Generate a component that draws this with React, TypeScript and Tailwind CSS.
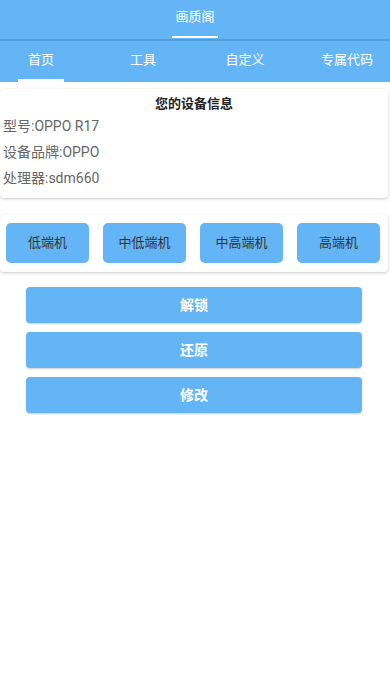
const tabs = ["首页", "工具", "自定义", "专属代码"];
const levels = ["低端机", "中低端机", "中高端机", "高端机"];
const actions = ["解锁", "还原", "修改"];

export default function App() {
  return (
    <div
      className="w-[390px] h-[680px] bg-white overflow-hidden"
      style={{ fontFamily: 'Roboto, "Noto Sans CJK SC", sans-serif' }}
    >
      {/* Header */}
      <div className="bg-[#64b5f6]">
        <div className="h-[39px] flex flex-col items-center justify-end">
          <span className="text-[13px] leading-[18px] text-white mb-[10px]">画质阁</span>
          <div className="w-[46px] h-[2px] bg-white mb-[1px]" />
        </div>
        <div className="h-[2px] bg-[#4f9edd]" />
        <div className="h-[41px] flex -ml-[10px] overflow-visible">
          {tabs.map((t, i) => (
            <div key={t} className="w-[102px] shrink-0 flex flex-col items-center justify-end">
              <span className="text-[13px] leading-[18px] text-white mb-[10px]">{t}</span>
              <div className={`w-[46px] h-[3px] ${i === 0 ? "bg-white" : "bg-transparent"}`} />
            </div>
          ))}
        </div>
      </div>

      {/* Device info */}
      <div className="mt-[7px] w-[388px] rounded-[4px] bg-white shadow-[0_1px_3px_rgba(0,0,0,0.22)] pt-[6px] pb-[7px] px-[3px]">
        <div className="text-center text-[13px] leading-[18px] font-bold text-[#222]">您的设备信息</div>
        <div className="text-[14px] leading-[26px] text-[#666]">型号:OPPO R17</div>
        <div className="text-[14px] leading-[26px] text-[#666]">设备品牌:OPPO</div>
        <div className="text-[14px] leading-[26px] text-[#666]">处理器:sdm660</div>
      </div>

      {/* Level buttons */}
      <div className="mt-[17px] w-[388px] rounded-[4px] bg-white shadow-[0_1px_3px_rgba(0,0,0,0.22)] pt-[8px] pb-[9px] pl-[6px] flex gap-[14px]">
        {levels.map((l) => (
          <button
            key={l}
            className="w-[83px] h-[40px] rounded-[5px] bg-[#64b5f6] text-[13px] text-[#333]"
          >
            {l}
          </button>
        ))}
      </div>

      {/* Actions */}
      <div className="mt-[15px] px-[26px] flex flex-col gap-[9px] w-[388px]">
        {actions.map((a) => (
          <button
            key={a}
            className="h-[36px] rounded-[4px] bg-[#64b5f6] text-[14px] font-bold text-white shadow-[0_1px_2px_rgba(0,0,0,0.2)]"
          >
            {a}
          </button>
        ))}
      </div>
    </div>
  );
}
